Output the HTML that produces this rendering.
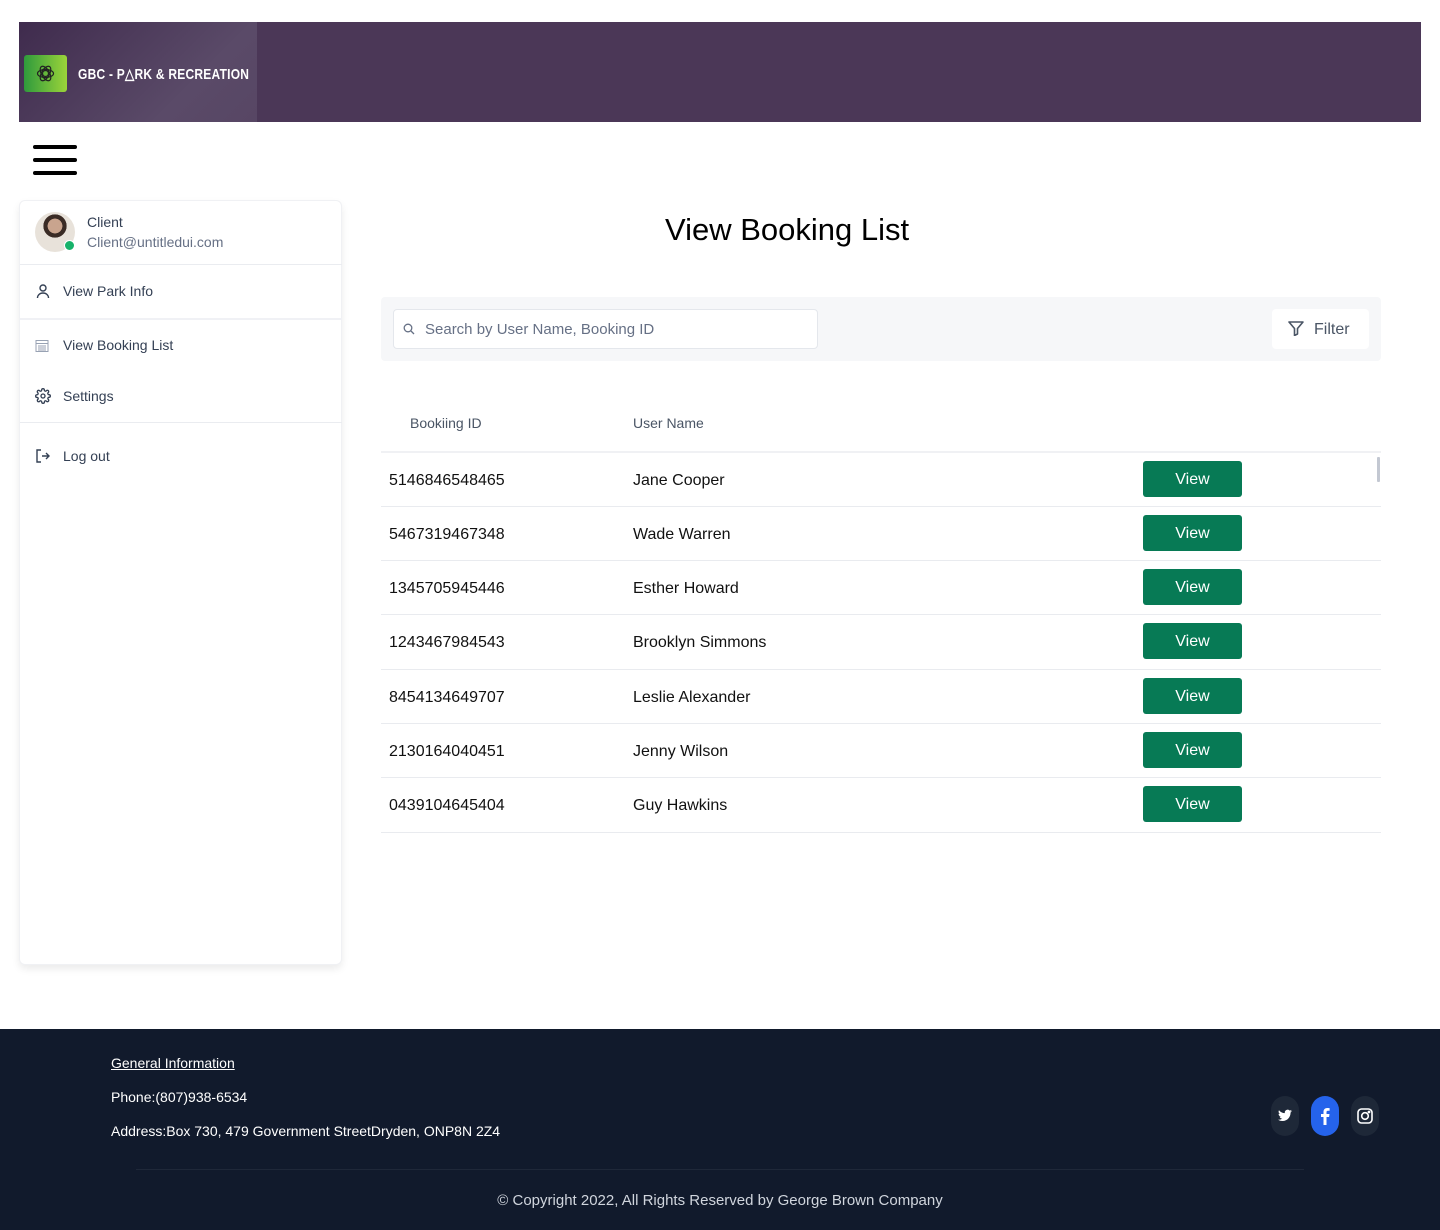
<!DOCTYPE html>
<html><head><meta charset="utf-8"><style>
*{margin:0;padding:0;box-sizing:border-box}
body{width:1440px;height:1230px;background:#fff;font-family:"Liberation Sans",sans-serif;position:relative;overflow:hidden;color:#111}
.abs{position:absolute}
.hdr{left:19px;top:22px;width:1402px;height:100px;background:#4b3757}
.hdrl{left:19px;top:22px;width:238px;height:100px;background:linear-gradient(135deg,#3f2b4d 0%,#5a4a68 70%,#574664 100%)}
.logo{left:24px;top:55px;width:43px;height:37px;border-radius:3px;background:linear-gradient(90deg,#2f9a3c,#9bd43a)}
.brand{left:78px;top:65px;color:#fff;font-weight:bold;font-size:15px;letter-spacing:0.3px;transform:scaleX(0.8);transform-origin:left}
.burger div{position:absolute;left:33px;width:44px;height:4px;border-radius:2px;background:#000}
.side{left:19px;top:200px;width:323px;height:765px;border-radius:6px;background:#fff;box-shadow:0 4px 8px rgba(0,0,0,.08);border:1px solid #f0f1f4}
.item{position:absolute;left:63px;font-size:14px;color:#344054}
.ic{position:absolute;left:35px}
.hl{position:absolute;left:20px;width:322px;height:1px;background:#eaecf0}
h1{position:absolute;left:665px;top:212px;font-weight:normal;font-size:31px;color:#000}
.bar{left:381px;top:297px;width:1000px;height:64px;background:#f6f7f9;border-radius:4px}
.search{left:393px;top:309px;width:425px;height:40px;background:#fff;border:1px solid #e4e7ec;border-radius:4px}
.filter{left:1272px;top:309px;width:97px;height:40px;background:#fff;border-radius:4px}
.th{position:absolute;top:415px;font-size:14px;color:#4a5565}
.row{position:absolute;left:381px;width:1000px;height:54px;border-bottom:1px solid #e9ebef}
.row span{position:absolute;top:19px;font-size:16px;color:#111}
.btn{position:absolute;left:762px;top:8px;width:99px;height:36px;background:#077a55;border-radius:3px;color:#fff;font-size:16px;text-align:center;line-height:37px}
.foot{left:0;top:1029px;width:1440px;height:201px;background:#111a2c;color:#fff;font-size:14px}
.soc{position:absolute;top:1096px;width:28px;height:40px;border-radius:14px;background:#1e2838}
</style></head><body>
<div class="abs hdr"></div><div class="abs hdrl"></div>
<div class="abs logo"><svg width="43" height="37" viewBox="0 0 43 37"><g fill="none" stroke="#222" stroke-width="1.2"><circle cx="21.5" cy="18.5" r="3"/><ellipse cx="21.5" cy="18.5" rx="8" ry="4"/><ellipse cx="21.5" cy="18.5" rx="8" ry="4" transform="rotate(60 21.5 18.5)"/><ellipse cx="21.5" cy="18.5" rx="8" ry="4" transform="rotate(-60 21.5 18.5)"/></g></svg></div>
<div class="abs brand">GBC - P&#9651;RK &amp; RECREATION</div>
<div class="burger"><div style="top:145px"></div><div style="top:158px"></div><div style="top:171px"></div></div>
<div class="abs side"></div>
<div class="abs" style="left:35px;top:212px;width:40px;height:40px;border-radius:50%;background:radial-gradient(circle at 50% 35%,#c9a48e 0 22%,#3a2b25 23% 35%,#e8e2da 36%)"></div>
<div class="abs" style="left:64px;top:240px;width:11px;height:11px;border-radius:50%;background:#17b26a;border:1.5px solid #fff"></div>
<div class="abs" style="left:87px;top:214px;font-size:14px;color:#344054">Client</div>
<div class="abs" style="left:87px;top:234px;font-size:14px;color:#667085">Client@untitledui.com</div>
<div class="hl" style="top:264px"></div>
<svg class="ic" style="top:283px" width="16" height="16" viewBox="0 0 16 16" fill="none" stroke="#344054" stroke-width="1.4"><circle cx="8" cy="5" r="3"/><path d="M2.5 15c0-3 2.5-5 5.5-5s5.5 2 5.5 5"/></svg>
<div class="item" style="top:283px">View Park Info</div>
<div class="hl" style="top:318px;height:2px;background:#f0f1f5"></div>
<svg class="ic" style="top:339px" width="14" height="13" viewBox="0 0 14 13" fill="none" stroke="#98a2b3" stroke-width="1"><rect x="1" y="1.5" width="12" height="11"/><path d="M1 4.5h12M3 7h8M3 9h8M3 11h8"/></svg>
<div class="item" style="top:337px">View Booking List</div>
<svg class="ic" style="top:388px" width="16" height="16" viewBox="0 0 24 24" fill="none" stroke="#344054" stroke-width="2"><circle cx="12" cy="12" r="3"/><path d="M19.4 15a1.7 1.7 0 0 0 .3 1.8l.1.1a2 2 0 1 1-2.8 2.8l-.1-.1a1.7 1.7 0 0 0-1.8-.3 1.7 1.7 0 0 0-1 1.5V21a2 2 0 1 1-4 0v-.1a1.7 1.7 0 0 0-1.1-1.5 1.7 1.7 0 0 0-1.8.3l-.1.1a2 2 0 1 1-2.8-2.8l.1-.1a1.7 1.7 0 0 0 .3-1.8 1.7 1.7 0 0 0-1.500-1H3a2 2 0 1 1 0-4h.1a1.7 1.7 0 0 0 1.5-1.1 1.7 1.7 0 0 0-.3-1.8l-.1-.1a2 2 0 1 1 2.8-2.8l.1.1a1.7 1.7 0 0 0 1.8.3H9a1.7 1.7 0 0 0 1-1.5V3a2 2 0 1 1 4 0v.1a1.7 1.7 0 0 0 1 1.5 1.7 1.7 0 0 0 1.8-.3l.1-.1a2 2 0 1 1 2.8 2.8l-.1.1a1.7 1.7 0 0 0-.3 1.8V9a1.7 1.7 0 0 0 1.5 1H21a2 2 0 1 1 0 4h-.1a1.7 1.7 0 0 0-1.5 1z"/></svg>
<div class="item" style="top:388px">Settings</div>
<div class="hl" style="top:422px"></div>
<svg class="ic" style="top:448px" width="16" height="16" viewBox="0 0 16 16" fill="none" stroke="#344054" stroke-width="1.4"><path d="M6 2H2v12h4M7 8h7M11 5l3 3-3 3"/></svg>
<div class="item" style="top:448px">Log out</div>
<h1>View Booking List</h1>
<div class="abs bar"></div>
<div class="abs search"></div>
<svg class="abs" style="left:403px;top:323px" width="12" height="12" viewBox="0 0 12 12" fill="none" stroke="#667085" stroke-width="1.3"><circle cx="5" cy="5" r="3.8"/><path d="M8 8l3 3"/></svg>
<div class="abs" style="left:425px;top:321px;font-size:15px;color:#667085">Search by User Name, Booking ID</div>
<div class="abs filter"></div>
<svg class="abs" style="left:1288px;top:321px" width="16" height="15" viewBox="0 0 16 15" fill="none" stroke="#4a5565" stroke-width="1.6" stroke-linejoin="round"><path d="M1 1h14l-5.5 6.5V13l-3 1.5V7.5z"/></svg>
<div class="abs" style="left:1314px;top:321px;font-size:16px;color:#4a5565">Filter</div>
<div class="th" style="left:410px">Bookiing ID</div>
<div class="th" style="left:633px">User Name</div>
<div class="abs" style="left:381px;top:451px;width:1000px;height:2px;background:#f0f1f4"></div>
<div class="abs" style="left:1377px;top:457px;width:3px;height:25px;background:#c3c8d2;border-radius:1px"></div>
<div class="row" style="top:453px"><span style="left:8px">5146846548465</span><span style="left:252px">Jane Cooper</span><div class="btn">View</div></div>
<div class="row" style="top:507px"><span style="left:8px">5467319467348</span><span style="left:252px">Wade Warren</span><div class="btn">View</div></div>
<div class="row" style="top:561px"><span style="left:8px">1345705945446</span><span style="left:252px">Esther Howard</span><div class="btn">View</div></div>
<div class="row" style="top:615px;height:55px"><span style="left:8px">1243467984543</span><span style="left:252px">Brooklyn Simmons</span><div class="btn">View</div></div>
<div class="row" style="top:670px"><span style="left:8px">8454134649707</span><span style="left:252px">Leslie Alexander</span><div class="btn">View</div></div>
<div class="row" style="top:724px"><span style="left:8px">2130164040451</span><span style="left:252px">Jenny Wilson</span><div class="btn">View</div></div>
<div class="row" style="top:778px;height:55px"><span style="left:8px">0439104645404</span><span style="left:252px">Guy Hawkins</span><div class="btn">View</div></div>
<div class="abs foot">
<div class="abs" style="left:111px;top:26px;text-decoration:underline">General Information</div>
<div class="abs" style="left:111px;top:60px">Phone:(807)938-6534</div>
<div class="abs" style="left:111px;top:94px">Address:Box 730, 479 Government StreetDryden, ONP8N 2Z4</div>
<div class="abs" style="left:136px;top:140px;width:1168px;height:1px;background:#1f2839"></div>
<div class="abs" style="left:0;width:1440px;text-align:center;top:163px;font-size:15px;color:#d0d5dd">© Copyright 2022, All Rights Reserved by George Brown Company</div>
</div>
<div class="soc" style="left:1271px"><svg style="margin:13px 0 0 7px" width="14" height="13" viewBox="0 0 24 20" fill="#fff"><path d="M24 2.4a10 10 0 0 1-2.8.8A5 5 0 0 0 23.3.4a10 10 0 0 1-3.1 1.2A4.9 4.9 0 0 0 11.8 6 14 14 0 0 1 1.7.9a4.9 4.9 0 0 0 1.5 6.6A4.9 4.9 0 0 1 1 6.9a4.9 4.9 0 0 0 3.9 4.9 5 5 0 0 1-2.2.1 4.9 4.9 0 0 0 4.6 3.4A9.9 9.9 0 0 1 0 17.3 14 14 0 0 0 7.5 19.5c9.1 0 14-7.5 14-14v-.6A10 10 0 0 0 24 2.4z"/></svg></div>
<div class="soc" style="left:1311px;background:#2563eb"><svg style="margin:11px 0 0 9px" width="10" height="18" viewBox="0 0 10 18" fill="#fff"><path d="M6.5 18V10h2.6l.4-3H6.5V5.2c0-.9.3-1.5 1.5-1.5H9.6V1.1A21 21 0 0 0 7.3 1C5 1 3.5 2.4 3.5 4.9V7H1v3h2.5v8z"/></svg></div>
<div class="soc" style="left:1351px"><svg style="margin:12px 0 0 6px" width="16" height="16" viewBox="0 0 16 16" fill="none" stroke="#fff" stroke-width="1.6"><rect x="1" y="1" width="14" height="14" rx="3.5"/><circle cx="8" cy="8" r="3.3"/><circle cx="12" cy="4" r=".6" fill="#fff"/></svg></div>
</body></html>
